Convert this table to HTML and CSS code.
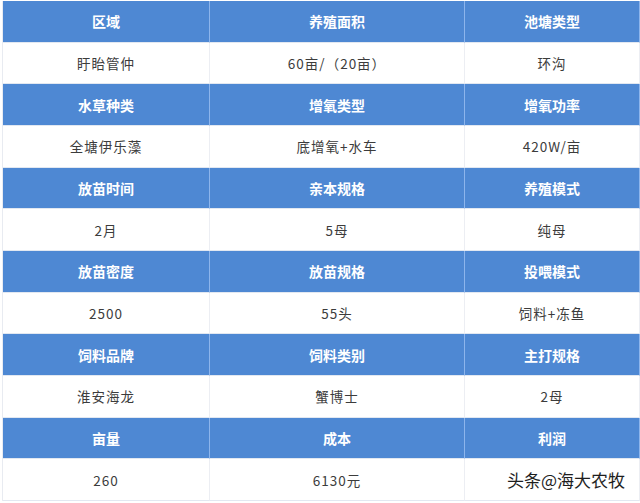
FILE: index.html
```html
<!DOCTYPE html>
<html lang="zh">
<head>
<meta charset="utf-8">
<link rel="stylesheet" href="styles.css">
</head>
<body>
<div class="page">
  <div class="tbl">
    <div class="c h">区域</div><div class="c h">养殖面积</div><div class="c h">池塘类型</div>
    <div class="c d">盱眙管仲</div><div class="c d">60亩/（20亩）</div><div class="c d">环沟</div>
    <div class="c h">水草种类</div><div class="c h">增氧类型</div><div class="c h">增氧功率</div>
    <div class="c d">全塘伊乐藻</div><div class="c d">底增氧+水车</div><div class="c d">420W/亩</div>
    <div class="c h">放苗时间</div><div class="c h">亲本规格</div><div class="c h">养殖模式</div>
    <div class="c d">2月</div><div class="c d">5母</div><div class="c d">纯母</div>
    <div class="c h">放苗密度</div><div class="c h">放苗规格</div><div class="c h">投喂模式</div>
    <div class="c d">2500</div><div class="c d">55头</div><div class="c d">饲料+冻鱼</div>
    <div class="c h">饲料品牌</div><div class="c h">饲料类别</div><div class="c h">主打规格</div>
    <div class="c d">淮安海龙</div><div class="c d">蟹博士</div><div class="c d">2母</div>
    <div class="c h">亩量</div><div class="c h">成本</div><div class="c h">利润</div>
    <div class="c d">260</div><div class="c d">6130元</div><div class="c d"></div>
  </div>
  <div class="mark">头条@海大农牧</div>
</div>
</body>
</html>
```
FILE: styles.css
```css
html, body {
  margin: 0;
  padding: 0;
  background: #ffffff;
}
.page {
  position: relative;
  width: 640px;
  height: 503px;
  overflow: hidden;
}
.tbl {
  display: grid;
  grid-template-columns: 207px 255px 175px;
  grid-auto-rows: 41.67px;
  margin: 1px 0 0 2px;
  border-left: 1px solid #e8ebf1;
  font-family: "Noto Sans CJK SC", "Noto Sans", sans-serif;
  font-size: 14px;
}
.c {
  box-sizing: border-box;
  display: flex;
  align-items: center;
  justify-content: center;
  border-bottom: 1px solid #e2e8f1;
}
.h {
  background: #4e88d3;
  color: #ffffff;
  font-weight: 700;
  border-right: 1px solid #8db5ec;
}
.d {
  background: #ffffff;
  color: #3c3c3c;
  font-size: 13.5px;
  letter-spacing: 1px;
  border-right: 1px solid #eceef3;
}
.mark {
  position: absolute;
  left: 507px;
  top: 467px;
  font-family: "Noto Sans CJK SC", sans-serif;
  font-size: 17px;
  color: #1e1e1e;
  text-shadow: 1px 0 0 #fff, -1px 0 0 #fff, 0 1px 0 #fff, 0 -1px 0 #fff;
  white-space: nowrap;
}
```
